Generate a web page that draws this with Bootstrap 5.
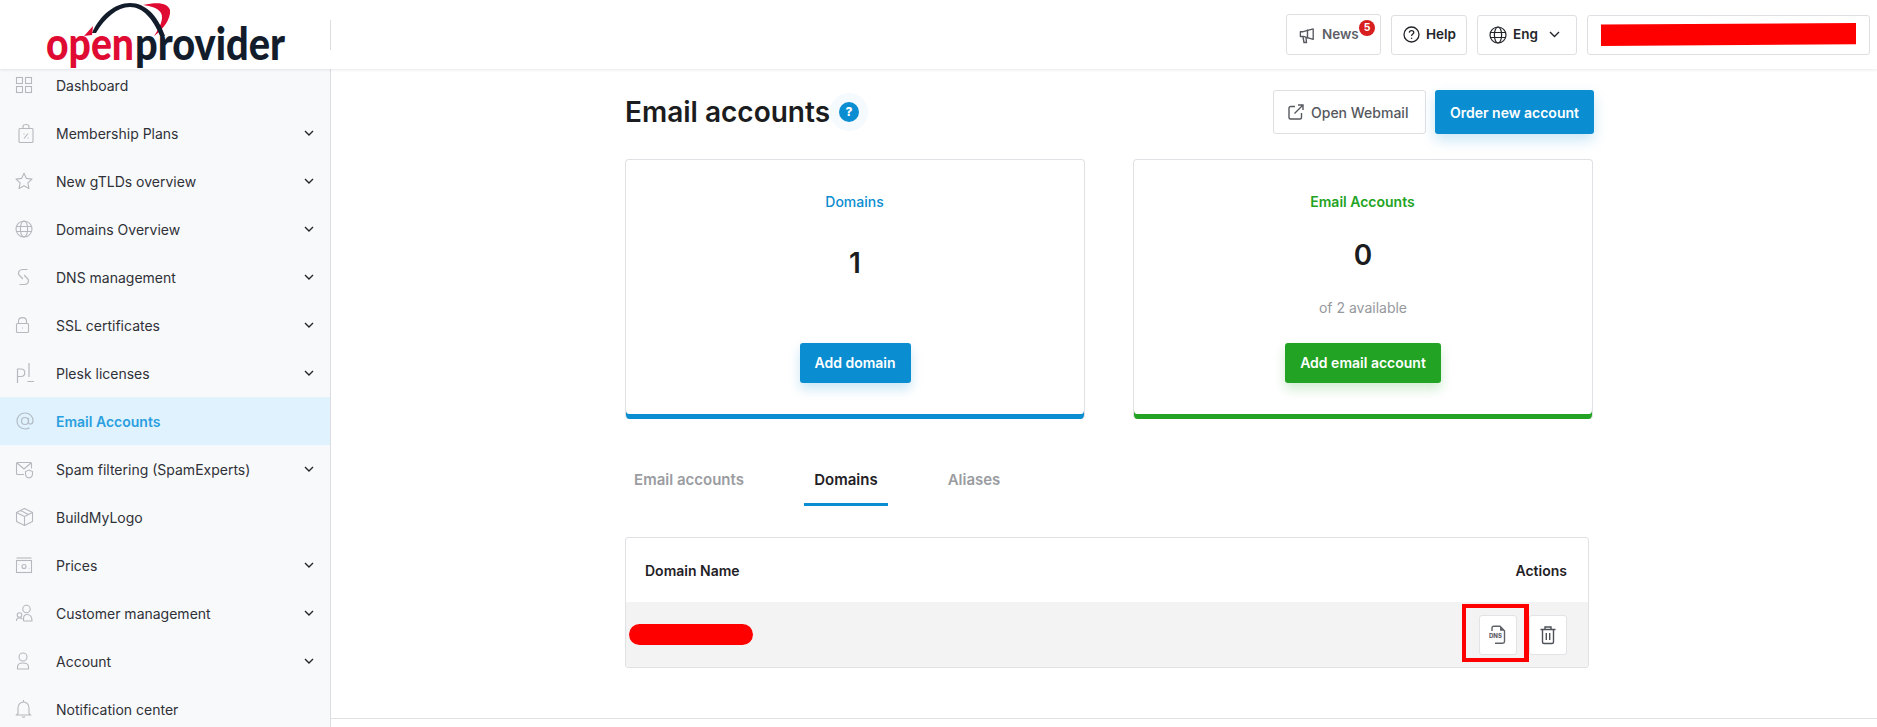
<!DOCTYPE html>
<html lang="en">
<head>
<meta charset="utf-8">
<title>Email accounts</title>
<link rel="stylesheet" href="https://cdn.jsdelivr.net/npm/bootstrap@5.3.0/dist/css/bootstrap.min.css">
<style>
html,body{height:727px;overflow:hidden;background:#fff}
body{font-family:Inter,"Liberation Sans",sans-serif;font-size:14px;color:#1d1f24}
.top-bar{height:69px;background:#fff;box-shadow:0 1px 3px rgba(30,40,60,.1);position:relative;z-index:2;padding:0 7px 0 0}
.logo-box{width:330px;height:69px;position:relative}
.logo-art{display:block}
.logo-word{font-family:Lato,"Open Sans",sans-serif;font-weight:900;font-size:46px}
.vsep{width:1px;height:30px;background:#dcdde0}
.hbtn{height:40px;display:inline-flex;align-items:center;gap:6px;padding:0 11px;background:#fff;border:1px solid #dedfe2;border-radius:3px;font-size:13.5px;font-weight:600;color:#23252a;position:relative}
.hbtn svg{flex:none}
.news-btn{color:#5d6066;height:41px;width:95px;padding:0 0 0 11px}
.help-btn{width:76px}
.lang-btn{width:100px}
.lang-caret{margin-left:5px}
.user-btn{width:283px;padding:0 13px}
.scribble{display:block;width:257px;height:23px;background:#f00;clip-path:polygon(0 6%,100% 0,100% 92%,0 100%)}
.count-dot{position:absolute;left:72px;top:5px;width:16px;height:16px;border-radius:50%;background:#d81f1f;color:#fff;font-size:10.5px;font-weight:700;display:flex;align-items:center;justify-content:center}
.shell{height:658px}
.side-col{width:331px;flex:none;background:#f8f9fb;border-right:1px solid #dcdde0;overflow:hidden}
.side-list{margin-top:-8px}
.side-link{height:48px;display:flex;align-items:center;padding:0 16px 0 14px;color:#2f3137;font-size:14px;text-decoration:none}
.side-link .ico{width:42px;flex:none;display:flex}
.side-link .lbl{flex:1}
.side-link.active{background:#e0f2fd;color:#2a9fdf;font-weight:600}
.main-col{flex:1;position:relative;min-width:0}
.main-wrap{width:969px;margin-left:294px;padding-top:21px}
.page-title{font-size:28px;font-weight:600;margin:0;line-height:44px;color:#1b1c20}
.help-halo{width:38px;height:38px;border-radius:50%;background:#f4fafe;display:flex;align-items:center;justify-content:center}
.help-dot{width:20px;height:20px;border-radius:50%;background:#0a8dd1;color:#fff;font-size:12px;font-weight:800;display:flex;align-items:center;justify-content:center}
.act-btn{height:44px;display:inline-flex;align-items:center;border-radius:3px;font-size:14px}
.btn-webmail{width:153px;background:#fff;border:1px solid #dedfe2;color:#55585e;font-weight:500;gap:7px;padding:0 0 0 14px}
.btn-order{width:159px;justify-content:center;background:#0a8dd1;border:0;color:#fff;font-weight:600;box-shadow:0 6px 14px rgba(10,141,209,.22)}
.stat-grid{display:grid;grid-template-columns:460px 460px;gap:48px;margin-top:25px}
.stat-box{height:260px;border:1px solid #e0e1e4;border-radius:4px;border-bottom-width:0;display:flex;flex-direction:column;align-items:center;padding-top:31px;position:relative;overflow:hidden}
.stat-blue{box-shadow:inset 0 -5px 0 #0a8dd1}
.stat-green{box-shadow:inset 0 -5px 0 #22a323}
.stat-label{font-size:14px;font-weight:500;line-height:21px;margin-left:-1px}
.tx-blue{color:#0a8dd1}
.tx-green{color:#22a323;font-weight:600}
.stat-num{font-size:28px;font-weight:600;line-height:42px;color:#1b1c20}
.stat-one{margin-top:30px}
.stat-two{margin-top:22px}
.stat-sub{font-size:14px;color:#96989e;line-height:22px;margin-top:21px}
.stat-cta{position:absolute;top:183px;height:40px;display:flex;align-items:center;justify-content:center;border:0;border-radius:3px;color:#fff;font-weight:600;font-size:14px;padding-bottom:1px}
.cta-blue{width:111px;background:#0a8dd1;box-shadow:0 6px 12px rgba(10,141,209,.22)}
.cta-green{width:156px;background:#22a323;box-shadow:0 6px 12px rgba(34,163,35,.22)}
.tab-row{margin-top:40px;height:47px;gap:0}
.tab-item{height:47px;display:flex;align-items:center;justify-content:center;font-size:15px;font-weight:600;color:#9a9ca1;text-decoration:none;padding-bottom:1px;border-bottom:3px solid transparent}
.tab-a{width:116px;margin-left:6px}
.tab-b{width:84px;margin-left:57px;color:#1f2126;border-bottom-color:#0a8dd1}
.tab-c{width:84px;margin-left:44px}
.grid-box{width:964px;margin-top:31px;border:1px solid #e0e1e4;border-radius:3px;position:relative;overflow:hidden}
.grid-box .table{margin:0;--bs-table-bg:transparent}
.grid-box th{height:64px;vertical-align:middle;border:0;font-size:14px;font-weight:600;color:#1f2126}
.grid-box td{height:65px;vertical-align:middle;border:0;background:#f3f3f4;padding:0}
.cell-l{padding-left:19px!important}
.cell-r{padding-right:21px!important}
.pill-mask{display:block;width:124px;height:21px;border-radius:11px;background:#f00;margin-left:3px}
.row-btn{width:38px;height:40px;display:inline-flex;align-items:center;justify-content:center;background:#fff;border:1px solid #e2e3e6;border-radius:3px}
.dns-txt{font-family:Inter,"Liberation Sans",sans-serif;font-size:6px;font-weight:800;fill:#5f6268}
.mark-box{position:absolute;left:1131px;top:535px;width:67px;height:58px;border:4px solid #f00;border-right-width:5px;pointer-events:none}
.foot-line{position:absolute;left:0;right:0;top:649px;border-top:1px solid #e0e1e4}
</style>
</head>
<body>
<header class="top-bar d-flex align-items-center justify-content-between">
  <div class="d-flex align-items-center">
    <a href="#" class="logo-box d-block text-decoration-none">
      <svg class="logo-art" width="330" height="69" viewBox="0 0 330 69">
        <path d="M143 5C160 1 168 4 170 10C171 18 164 29 154 36C160 27 164 19 161 13C158 8 151 6 143 5Z" fill="#e00b33"/>
        <path d="M92 33C100 15 115 3 130 3C146 3 158 16 165 36L160 36C153 19 143 7 130 7C117 7 105 18 96 33Z" fill="#131c2b"/>
        <path d="M84 36L93 26L92 35Z" fill="#e00b33"/>
        <text x="46" y="60" class="logo-word" fill="#e00b33" textLength="88" lengthAdjust="spacingAndGlyphs">open</text>
        <text x="135" y="60" class="logo-word" fill="#131c2b" textLength="150" lengthAdjust="spacingAndGlyphs">provider</text>
      </svg>
    </a>
    <span class="vsep"></span>
  </div>
  <div class="d-flex align-items-center" style="gap:10px">
    <a class="hbtn news-btn text-decoration-none" href="#">
      <svg width="18" height="18" viewBox="0 0 18 18" fill="none" stroke="#55585e" stroke-width="1.4" stroke-linejoin="round"><path d="M16 2.5L5.5 5.5H2.5V10.5H5.500L16 13.5Z" transform="matrix(.95 0 0 .95 0 .5)"/><path d="M5 11L6 16.500H8.500L8 11.500"/><path d="M9.500 3.500V12.500"/></svg>News
      <span class="count-dot">5</span>
    </a>
    <a class="hbtn help-btn text-decoration-none" href="#">
      <svg width="17" height="17" viewBox="0 0 17 17" fill="none" stroke="#23252a" stroke-width="1.3"><circle cx="8.5" cy="8.5" r="7.5"/><path d="M6.300 6.600C6.400 5.300 7.400 4.600 8.600 4.600C9.900 4.600 10.800 5.400 10.800 6.500C10.800 8 8.600 8.200 8.600 10"/><path d="M8.600 11.700V12.900"/></svg>Help
    </a>
    <a class="hbtn lang-btn text-decoration-none" href="#">
      <svg width="18" height="18" viewBox="0 0 18 18" fill="none" stroke="#23252a" stroke-width="1.2"><circle cx="9" cy="9" r="8"/><ellipse cx="9" cy="9" rx="3.6" ry="8"/><path d="M1.500 6.500H16.500M1.500 11.500H16.500"/></svg>Eng
      <svg class="lang-caret" width="11" height="7" viewBox="0 0 11 7" fill="none" stroke="#23252a" stroke-width="1.4"><path d="M1 1L5.500 5.500L10 1"/></svg>
    </a>
    <div class="hbtn user-btn"><span class="scribble"></span></div>
  </div>
</header>

<div class="shell d-flex">
  <aside class="side-col">
    <nav class="side-list">
      <a class="side-link" href="#"><span class="ico"><svg width="20" height="20" viewBox="0 0 20 20" fill="none" stroke="#b5b8be" stroke-width="1.1"><rect x="2.500" y="2.500" width="6" height="6"/><rect x="11.500" y="2.500" width="6" height="6"/><rect x="2.500" y="11.500" width="6" height="6"/><rect x="11.500" y="11.500" width="6" height="6"/></svg></span><span class="lbl">Dashboard</span></a>
      <a class="side-link" href="#"><span class="ico"><svg width="20" height="20" viewBox="0 0 20 20" fill="none" stroke="#b5b8be" stroke-width="1.1"><rect x="5" y="5.500" width="14" height="14" rx="1"/><path d="M9 5.500V3.500C9 .8 15 .8 15 3.500V5.500"/><path d="M10 15.500L14 10.500M10 10.500V11.500M14 14.500V15.500"/></svg></span><span class="lbl">Membership Plans</span><svg width="10" height="6" viewBox="0 0 10 6" fill="none" stroke="#25272c" stroke-width="1.4"><path d="M1 1L5 5L9 1"/></svg></a>
      <a class="side-link" href="#"><span class="ico"><svg width="20" height="20" viewBox="0 0 20 20" fill="none" stroke="#b5b8be" stroke-width="1.1" stroke-linejoin="round"><path d="M10 2.300L12.400 7.400L18 8.100L13.900 11.900L15 17.500L10 14.700L5 17.500L6.100 11.900L2 8.100L7.600 7.400Z"/></svg></span><span class="lbl">New gTLDs overview</span><svg width="10" height="6" viewBox="0 0 10 6" fill="none" stroke="#25272c" stroke-width="1.4"><path d="M1 1L5 5L9 1"/></svg></a>
      <a class="side-link" href="#"><span class="ico"><svg width="20" height="20" viewBox="0 0 20 20" fill="none" stroke="#b5b8be" stroke-width="1.1"><circle cx="10" cy="10" r="8"/><ellipse cx="10" cy="10" rx="3.600" ry="8"/><path d="M2.500 7.500H17.500M2.500 12.500H17.500"/></svg></span><span class="lbl">Domains Overview</span><svg width="10" height="6" viewBox="0 0 10 6" fill="none" stroke="#25272c" stroke-width="1.4"><path d="M1 1L5 5L9 1"/></svg></a>
      <a class="side-link" href="#"><span class="ico"><svg width="20" height="20" viewBox="0 0 20 20" fill="none" stroke="#b5b8be" stroke-width="1.2" stroke-linecap="round"><path d="M13 2.500H8.500C4.500 2.500 3.500 6.500 5.500 8.500L8.500 11.500"/><path d="M6 17.500H10.500C14.500 17.500 15.500 13.500 13.500 11.500L10.500 8.500"/></svg></span><span class="lbl">DNS management</span><svg width="10" height="6" viewBox="0 0 10 6" fill="none" stroke="#25272c" stroke-width="1.4"><path d="M1 1L5 5L9 1"/></svg></a>
      <a class="side-link" href="#"><span class="ico"><svg width="20" height="20" viewBox="0 0 20 20" fill="none" stroke="#b5b8be" stroke-width="1.1"><rect x="2.500" y="8.500" width="12" height="9" rx="1"/><path d="M4.500 8.500V6C4.500 1.500 12.500 1.500 12.500 6V8.500"/><path d="M8.500 12.500V13.500"/></svg></span><span class="lbl">SSL certificates</span><svg width="10" height="6" viewBox="0 0 10 6" fill="none" stroke="#25272c" stroke-width="1.4"><path d="M1 1L5 5L9 1"/></svg></a>
      <a class="side-link" href="#"><span class="ico"><svg width="22" height="22" viewBox="0 0 22 22" fill="none" stroke="#b5b8be" stroke-width="1.2"><path d="M3.500 21V7H7C12 7 12 14.500 7 14.500H3.500"/><path d="M15 1V15M13.500 19.500H20"/></svg></span><span class="lbl">Plesk licenses</span><svg width="10" height="6" viewBox="0 0 10 6" fill="none" stroke="#25272c" stroke-width="1.4"><path d="M1 1L5 5L9 1"/></svg></a>
      <a class="side-link active" href="#"><span class="ico"><svg width="20" height="20" viewBox="0 0 20 20" fill="none" stroke="#b3bcc5" stroke-width="1.2"><circle cx="11" cy="10" r="3.500"/><path d="M14.500 7V11.500C14.500 14 19 13.500 19 10C19 5 15.500 2 11 2C6.500 2 3 5.500 3 10C3 14.500 6.500 18 11 18C13 18 14.500 17.500 15.500 16.800"/></svg></span><span class="lbl">Email Accounts</span></a>
      <a class="side-link" href="#"><span class="ico"><svg width="20" height="20" viewBox="0 0 20 20" fill="none" stroke="#b5b8be" stroke-width="1.1"><path d="M10 15.500H3.500C2.900 15.500 2.500 15.100 2.500 14.500V4.500C2.500 3.900 2.900 3.500 3.500 3.500H16.500C17.100 3.500 17.500 3.900 17.500 4.500V9.500"/><path d="M3 4L10 10L17 4"/><path d="M15 11L18.500 12.500V15C18.500 17 17 18.500 15 19C13 18.500 11.500 17 11.500 15V12.500Z"/></svg></span><span class="lbl">Spam filtering (SpamExperts)</span><svg width="10" height="6" viewBox="0 0 10 6" fill="none" stroke="#25272c" stroke-width="1.4"><path d="M1 1L5 5L9 1"/></svg></a>
      <a class="side-link" href="#"><span class="ico"><svg width="20" height="20" viewBox="0 0 20 20" fill="none" stroke="#b5b8be" stroke-width="1.1" stroke-linejoin="round"><path d="M10.500 1.500L18.500 5.500V14.500L10.500 18.500L2.500 14.500V5.500Z"/><path d="M2.500 5.500L10.500 9.500L18.500 5.500M10.500 9.500V18.500M6.500 3.500L14.500 7.500"/></svg></span><span class="lbl">BuildMyLogo</span></a>
      <a class="side-link" href="#"><span class="ico"><svg width="20" height="20" viewBox="0 0 20 20" fill="none" stroke="#b5b8be" stroke-width="1.1"><rect x="2.500" y="5.500" width="15" height="12"/><path d="M2.500 3H17.500"/><circle cx="10" cy="11.500" r="2"/><path d="M5 9.500V10M15 13V13.500"/></svg></span><span class="lbl">Prices</span><svg width="10" height="6" viewBox="0 0 10 6" fill="none" stroke="#25272c" stroke-width="1.4"><path d="M1 1L5 5L9 1"/></svg></a>
      <a class="side-link" href="#"><span class="ico"><svg width="20" height="20" viewBox="0 0 20 20" fill="none" stroke="#b5b8be" stroke-width="1.1"><circle cx="12.500" cy="6" r="3.700"/><path d="M9.500 18V16C9.500 12.500 11 11.500 13 11.500C15.500 11.500 18 13 18 18H9.500"/><circle cx="5.500" cy="12" r="2.300"/><path d="M2.500 18V17C2.500 15.500 4 15 5.500 15C7 15 8 15.500 8.500 16"/></svg></span><span class="lbl">Customer management</span><svg width="10" height="6" viewBox="0 0 10 6" fill="none" stroke="#25272c" stroke-width="1.4"><path d="M1 1L5 5L9 1"/></svg></a>
      <a class="side-link" href="#"><span class="ico"><svg width="20" height="20" viewBox="0 0 20 20" fill="none" stroke="#b5b8be" stroke-width="1.1"><circle cx="9" cy="6" r="4"/><path d="M3.500 18V16C3.500 13 6 12 9 12C12 12 14.500 13 14.500 16V18Z"/></svg></span><span class="lbl">Account</span><svg width="10" height="6" viewBox="0 0 10 6" fill="none" stroke="#25272c" stroke-width="1.4"><path d="M1 1L5 5L9 1"/></svg></a>
      <a class="side-link" href="#"><span class="ico"><svg width="20" height="20" viewBox="0 0 20 20" fill="none" stroke="#b5b8be" stroke-width="1.1"><path d="M4 14.500V9C4 5.500 6.500 3 9.500 3C12.500 3 15 5.500 15 9V14.500L16.500 16H2.500Z"/><path d="M8 17.500C8.500 18.500 10.500 18.500 11 17.500M9.500 1V3"/></svg></span><span class="lbl">Notification center</span></a>
    </nav>
  </aside>

  <main class="main-col">
    <div class="main-wrap">
      <div class="d-flex align-items-center justify-content-between">
        <div class="d-flex align-items-center">
          <h1 class="page-title">Email accounts</h1>
          <span class="help-halo"><span class="help-dot">?</span></span>
        </div>
        <div class="d-flex" style="gap:9px">
          <a class="act-btn btn-webmail text-decoration-none" href="#">
            <svg width="16" height="16" viewBox="0 0 16 16" fill="none" stroke="#55585e" stroke-width="1.4"><path d="M7 2.500H2.500C1.800 2.500 1 3.200 1 4V13.500C1 14.300 1.800 15 2.500 15H12C12.800 15 13.500 14.300 13.500 13.500V9"/><path d="M10 1H15V6M15 1L6.500 9.500"/></svg>Open Webmail
          </a>
          <a class="act-btn btn-order text-decoration-none" href="#">Order new account</a>
        </div>
      </div>

      <section class="stat-grid">
        <div class="stat-box stat-blue">
          <div class="stat-label tx-blue">Domains</div>
          <div class="stat-num stat-one">1</div>
          <a class="stat-cta cta-blue text-decoration-none" href="#">Add domain</a>
        </div>
        <div class="stat-box stat-green">
          <div class="stat-label tx-green">Email Accounts</div>
          <div class="stat-num stat-two">0</div>
          <div class="stat-sub">of 2 available</div>
          <a class="stat-cta cta-green text-decoration-none" href="#">Add email account</a>
        </div>
      </section>

      <nav class="nav tab-row">
        <a class="tab-item tab-a" href="#">Email accounts</a>
        <a class="tab-item tab-b" href="#">Domains</a>
        <a class="tab-item tab-c" href="#">Aliases</a>
      </nav>

      <div class="grid-box">
        <table class="table">
          <thead><tr><th class="cell-l">Domain Name</th><th class="cell-r text-end">Actions</th></tr></thead>
          <tbody>
            <tr>
              <td><span class="pill-mask"></span></td>
              <td class="cell-r text-end">
                <div class="d-inline-flex" style="gap:12px">
                  <span class="row-btn"><svg width="18" height="20" viewBox="0 0 18 20" fill="none"><path d="M3 6V3C3 2 3.700 1.300 4.700 1.300H11L15.500 5.800V16.500C15.500 17.500 14.800 18.200 13.800 18.200H6" stroke="#5f6268" stroke-width="1.4"/><path d="M11 1.500V5.800H15.500" fill="#5f6268"/><text class="dns-txt" x="0" y="13">DNS</text></svg></span>
                  <span class="row-btn"><svg width="18" height="20" viewBox="0 0 18 20" fill="none" stroke="#4e5157" stroke-width="1.4"><path d="M1.500 4.500H16.500"/><path d="M6 4.500V2H12V4.500"/><path d="M3.500 4.500V17C3.500 17.800 4.200 18.500 5 18.500H13C13.800 18.500 14.500 17.800 14.500 17V4.500"/><path d="M7.300 8V15M10.700 8V15"/></svg></span>
                </div>
              </td>
            </tr>
          </tbody>
        </table>
      </div>
    </div>
    <div class="mark-box"></div>
    <div class="foot-line"></div>
  </main>
</div>
<script src="https://cdn.jsdelivr.net/npm/bootstrap@5.3.0/dist/js/bootstrap.bundle.min.js"></script>
</body>
</html>
